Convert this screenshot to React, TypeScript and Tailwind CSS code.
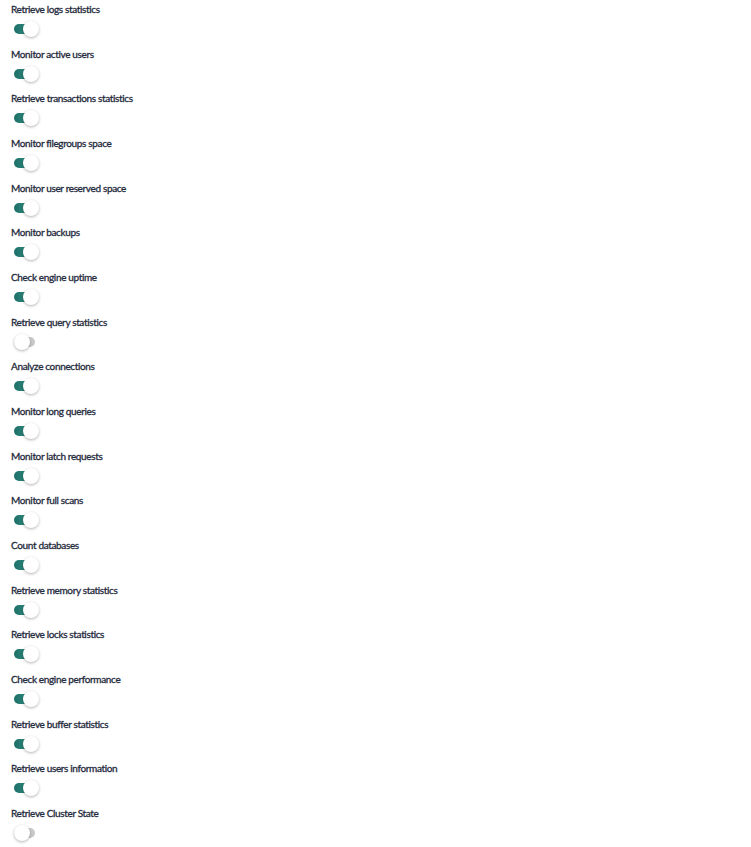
import React from 'react'

const items: { label: string; on: boolean }[] = [
  { label: 'Retrieve logs statistics', on: true },
  { label: 'Monitor active users', on: true },
  { label: 'Retrieve transactions statistics', on: true },
  { label: 'Monitor filegroups space', on: true },
  { label: 'Monitor user reserved space', on: true },
  { label: 'Monitor backups', on: true },
  { label: 'Check engine uptime', on: true },
  { label: 'Retrieve query statistics', on: false },
  { label: 'Analyze connections', on: true },
  { label: 'Monitor long queries', on: true },
  { label: 'Monitor latch requests', on: true },
  { label: 'Monitor full scans', on: true },
  { label: 'Count databases', on: true },
  { label: 'Retrieve memory statistics', on: true },
  { label: 'Retrieve locks statistics', on: true },
  { label: 'Check engine performance', on: true },
  { label: 'Retrieve buffer statistics', on: true },
  { label: 'Retrieve users information', on: true },
  { label: 'Retrieve Cluster State', on: false },
]

const Toggle = ({ on }: { on: boolean }) => (
  <div className="relative w-[26px] h-4 flex items-center">
    <div
      className={
        on
          ? 'w-[21px] h-[10px] rounded-full bg-gradient-to-r from-[#1d6f67] to-[#3a9a8d]'
          : 'w-[21px] h-[10px] rounded-full bg-[#c9c9c9]'
      }
    />
    <div
      className={
        on
          ? 'absolute left-[9px] top-0 w-4 h-4 rounded-full bg-white shadow-[0_1px_3px_rgba(0,0,0,0.3)]'
          : 'absolute left-0 top-0 w-4 h-4 rounded-full bg-white shadow-[0_1px_3px_rgba(0,0,0,0.3)]'
      }
    />
  </div>
)

const App = () => {
  return (
    <div className="min-h-screen bg-white px-[14px] pt-px" style={{ fontFamily: 'Lato, sans-serif' }}>
      {items.map((it) => (
        <div key={it.label} className="h-[44.67px]">
          <div className="h-4 leading-4 text-[10px] font-normal tracking-[-0.35px] text-[#1f2a3c] -ml-[3px] [-webkit-text-stroke:0.3px_#1f2a3c]">
            {it.label}
          </div>
          <div className="mt-1">
            <Toggle on={it.on} />
          </div>
        </div>
      ))}
    </div>
  )
}

export default App
